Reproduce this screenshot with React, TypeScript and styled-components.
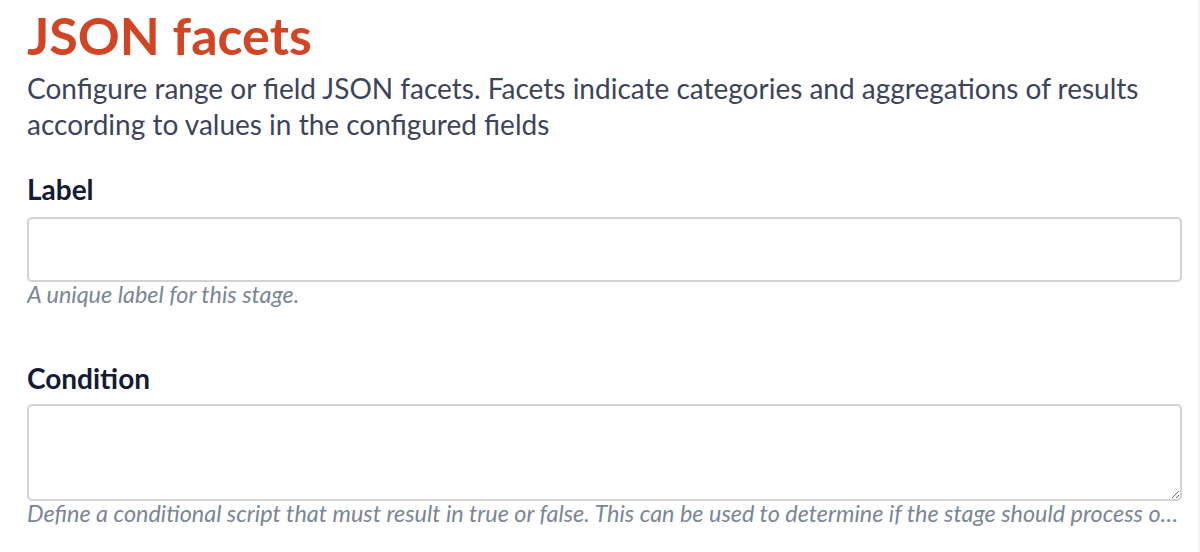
import styled, { createGlobalStyle } from "styled-components";

const GlobalStyle = createGlobalStyle`
  html, body {
    margin: 0;
    padding: 0;
    background: #ffffff;
  }
  body {
    font-family: Lato, "Noto Sans", sans-serif;
  }
`;

const Shell = styled.div`
  display: flex;
  width: 1200px;
  height: 552px;
  overflow: hidden;
`;

const Panel = styled.div`
  flex: 1;
  min-width: 0;
  padding: 5px 16px 0 27px;
`;

const ScrollTrack = styled.div`
  width: 2px;
  background: #f3f3f3;
`;

const Title = styled.h1`
  margin: 0;
  font-size: 52px;
  line-height: 60px;
  font-weight: 700;
  color: #d14524;
`;

const Description = styled.p`
  margin: 5px 0 0;
  font-size: 28px;
  line-height: 36px;
  color: #3d4459;
`;

const Field = styled.div<{ $gap: number }>`
  display: flex;
  flex-direction: column;
  margin-top: ${(p) => p.$gap}px;
`;

const FieldLabel = styled.label`
  font-size: 28px;
  line-height: 36px;
  font-weight: 700;
  color: #141b34;
`;

const TextInput = styled.input`
  box-sizing: border-box;
  margin-top: 10px;
  width: 100%;
  height: 65px;
  border: 2px solid #d3d3d3;
  border-radius: 5px;
  background: #fff;
  font: inherit;
  outline: none;
`;

const TextArea = styled.textarea`
  box-sizing: border-box;
  margin-top: 8px;
  width: 100%;
  height: 97px;
  border: 2px solid #d3d3d3;
  border-radius: 5px;
  background: #fff;
  font: inherit;
  resize: vertical;
  outline: none;
  display: block;
`;

const Help = styled.div`
  margin-top: -2px;
  padding: 0 2px 4px 0;
  font-size: 23.4px;
  line-height: 28px;
  font-style: italic;
  color: #7b8696;
  white-space: nowrap;
  overflow: hidden;
  text-overflow: ellipsis;
`;

export default function App() {
  return (
    <>
      <GlobalStyle />
      <Shell>
        <Panel>
          <Title>JSON facets</Title>
          <Description>
            Configure range or field JSON facets. Facets indicate categories and aggregations of results
            according to values in the configured fields
          </Description>
          <Field $gap={29}>
            <FieldLabel>Label</FieldLabel>
            <TextInput />
            <Help>A unique label for this stage.</Help>
          </Field>
          <Field $gap={48}>
            <FieldLabel>Condition</FieldLabel>
            <TextArea />
            <Help>
              Define a conditional script that must result in true or false. This can be used to determine if the
              stage should process or skip this document.
            </Help>
          </Field>
        </Panel>
        <ScrollTrack />
      </Shell>
    </>
  );
}
